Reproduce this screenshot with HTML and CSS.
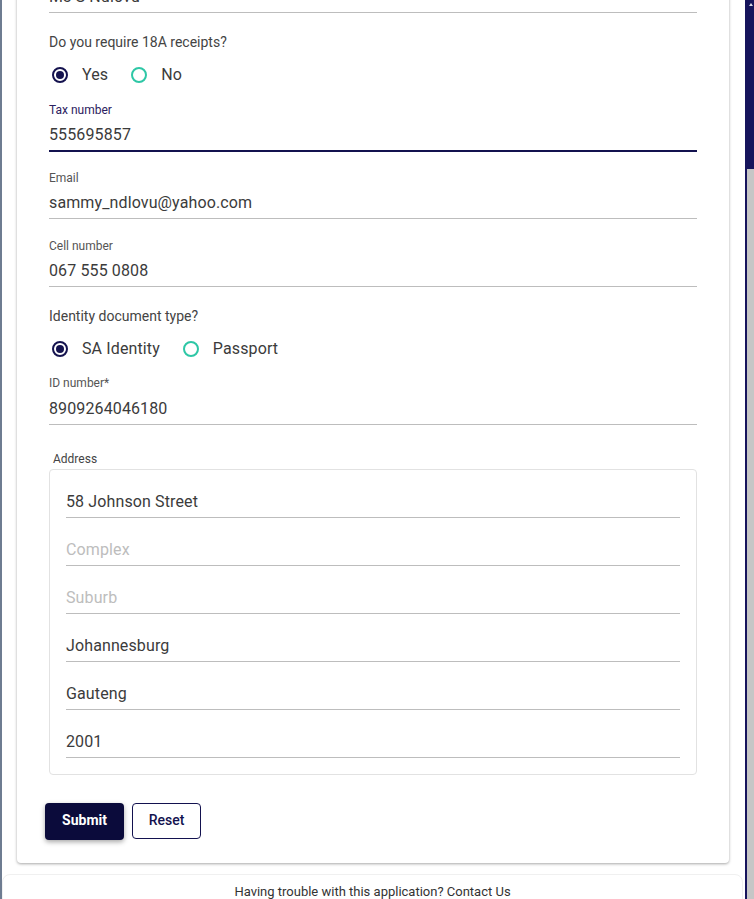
FILE: index.html
```html
<!DOCTYPE html>
<html lang="en">
<head>
<meta charset="utf-8">
<title>Application form</title>
<link rel="stylesheet" href="styles.css">
</head>
<body>
<div class="window">
  <div class="frame">
    <div class="card">
      <div class="field">
        <label class="field-label">Name</label>
        <div class="input">Ms S Ndlovu</div>
      </div>

      <p class="question q-first">Do you require 18A receipts?</p>
      <div class="radio-row">
        <span class="radio checked"></span><span class="radio-text">Yes</span>
        <span class="radio"></span><span class="radio-text">No</span>
      </div>

      <div class="field field-after-radio">
        <label class="field-label focused">Tax number</label>
        <div class="input focused">555695857</div>
      </div>

      <div class="field">
        <label class="field-label">Email</label>
        <div class="input">sammy_ndlovu@yahoo.com</div>
      </div>

      <div class="field">
        <label class="field-label">Cell number</label>
        <div class="input">067 555 0808</div>
      </div>

      <p class="question q-second">Identity document type?</p>
      <div class="radio-row">
        <span class="radio checked"></span><span class="radio-text">SA Identity</span>
        <span class="radio"></span><span class="radio-text">Passport</span>
      </div>

      <div class="field field-after-radio2">
        <label class="field-label">ID number*</label>
        <div class="input tall">8909264046180</div>
      </div>

      <div class="address">
        <div class="address-label">Address</div>
        <div class="address-box">
          <div class="input">58 Johnson Street</div>
          <div class="input placeholder">Complex</div>
          <div class="input placeholder">Suburb</div>
          <div class="input">Johannesburg</div>
          <div class="input">Gauteng</div>
          <div class="input">2001</div>
        </div>
      </div>

      <div class="actions">
        <button class="btn btn-primary" type="button">Submit</button>
        <button class="btn btn-outline" type="button">Reset</button>
      </div>
    </div>

    <div class="footer">Having trouble with this application? Contact Us</div>
  </div>
  <div class="scrollbar">
    <div class="thumb"><span class="arrow"></span></div>
  </div>
</div>
</body>
</html>
```
FILE: styles.css
```css
* { box-sizing: border-box; }

html, body {
  margin: 0;
  padding: 0;
  height: 899px;
  overflow: hidden;
  background: #ffffff;
  font-family: Roboto, "Liberation Sans", Arial, sans-serif;
  color: #3b3b3b;
}

.window {
  display: flex;
  height: 899px;
}

.frame {
  flex: 1;
  border-left: 2px solid #6e7c91;
  border-right: 2px solid #16145c;
  overflow: hidden;
  background: #ffffff;
}

.scrollbar {
  width: 7px;
  background: #c6c6c6;
}

.thumb {
  height: 169px;
  background: #16145c;
  display: flex;
  justify-content: center;
  padding-top: 3px;
}

.arrow {
  width: 0;
  height: 0;
  border-left: 2px solid transparent;
  border-right: 2px solid transparent;
  border-bottom: 3px solid #d8d8e6;
}

.card {
  margin: -60px 16px 0 15px;
  background: #ffffff;
  border-radius: 4px;
  box-shadow: 0 1px 3px rgba(0, 0, 0, 0.35);
  padding: 24px 32px 23px 32px;
}

.field-label {
  display: block;
  font-size: 12px;
  line-height: 16px;
  color: #555555;
}

.field-label.focused { color: #2c2160; }

.input {
  padding: 8px 0 6px 0;
  font-size: 16px;
  line-height: 18px;
  letter-spacing: 0.12px;
  color: #3b3b3b;
  border-bottom: 1px solid #bdbdbd;
  white-space: nowrap;
}

.input.tall { padding: 9px 0 6px 0; }

.input.focused {
  border-bottom-color: #13124f;
  box-shadow: 0 1px 0 #13124f;
}

.input.placeholder { color: #bdbdbd; }

.field { margin-top: 19px; }
.card > .field:first-child { margin-top: 0; }
.field-after-radio { margin-top: 15px; }
.field-after-radio2 { margin-top: 14px; }

.question {
  margin: 0;
  font-size: 14px;
  line-height: 20px;
  color: #444444;
}

.q-first { margin-top: 19px; }
.q-second { margin-top: 19px; }

.radio-row {
  display: flex;
  align-items: center;
  height: 24px;
  margin-top: 11px;
  padding-left: 3px;
}

.radio {
  width: 16px;
  height: 16px;
  border-radius: 50%;
  border: 2px solid #2ec7a6;
  margin-right: 14px;
  display: flex;
  align-items: center;
  justify-content: center;
}

.radio.checked { border-color: #15134f; }
.radio.checked::after {
  content: "";
  width: 8px;
  height: 8px;
  border-radius: 50%;
  background: #15134f;
}

.radio-text {
  font-size: 16px;
  line-height: 20px;
  letter-spacing: 0.12px;
  color: #3b3b3b;
  margin-right: 23px;
}

.address { margin-top: 26px; }

.address-label {
  font-size: 12px;
  line-height: 16px;
  color: #444444;
  padding-left: 4px;
}

.address-box {
  margin-top: 2px;
  border: 1px solid #e2e2e2;
  border-radius: 4px;
  padding: 15px 16px 16px 16px;
  display: flex;
  flex-direction: column;
  gap: 15px;
}

.actions {
  display: flex;
  gap: 8px;
  margin: 28px 0 0 -4px;
}

.btn {
  font-family: Roboto, "Liberation Sans", Arial, sans-serif;
  font-size: 14px;
  height: 37px;
  padding: 0 0 3px 0;
  border-radius: 4px;
  cursor: pointer;
}

.btn-primary {
  width: 79px;
  background: #0b0b3b;
  color: #ffffff;
  font-weight: 700;
  border: none;
  box-shadow: 0 2px 5px rgba(0, 0, 0, 0.35);
}

.btn-outline {
  width: 69px;
  height: 36px;
  background: #ffffff;
  color: #13124f;
  font-weight: 500;
  border: 1px solid #13124f;
}

.footer {
  margin: 11px 2px 0 0;
  height: 40px;
  border: 1px solid #f0f0f0;
  border-radius: 8px 8px 0 0;
  padding-top: 9px;
  text-align: center;
  font-size: 13px;
  line-height: 15px;
  color: #333333;
}
```
